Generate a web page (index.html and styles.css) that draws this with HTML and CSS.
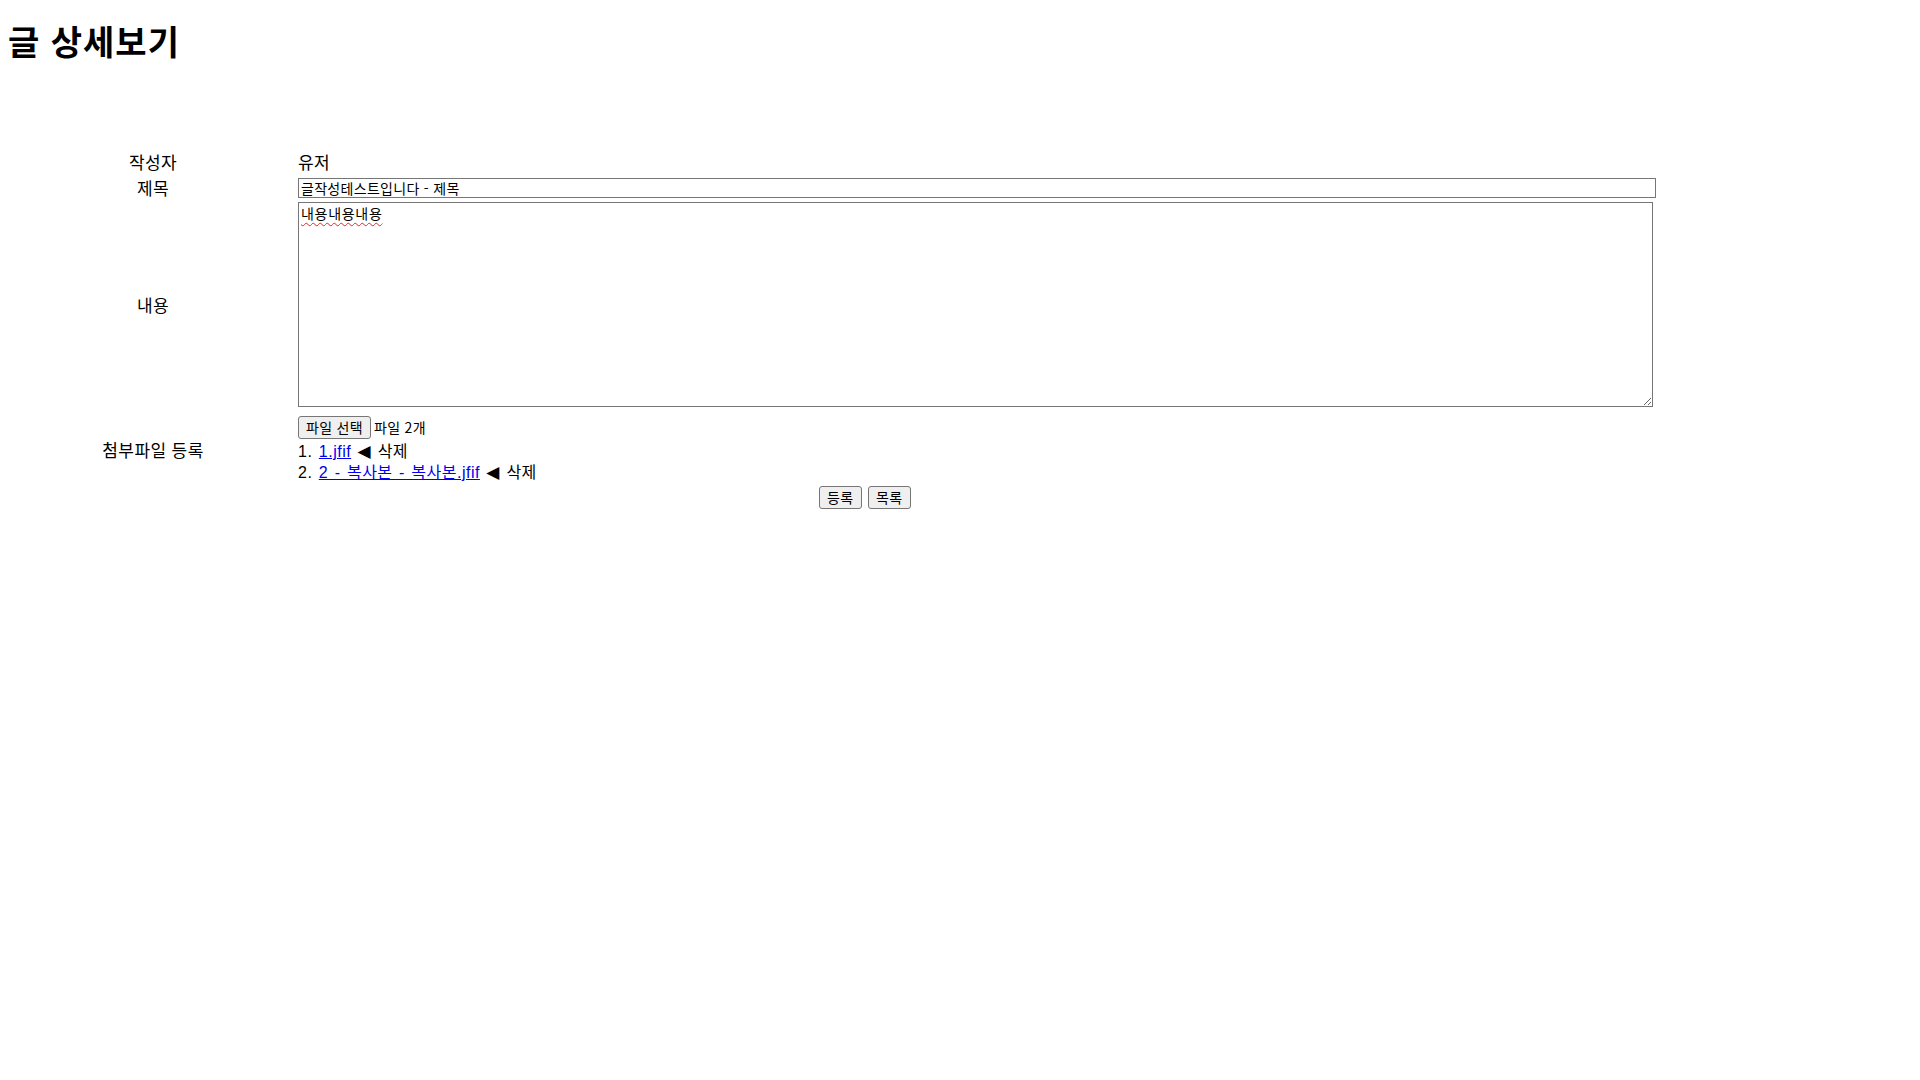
FILE: index.html
```html
<!DOCTYPE html>
<html lang="ko">
<head>
<meta charset="utf-8">
<title>글 상세보기</title>
<link rel="stylesheet" href="styles.css">
</head>
<body>
<h1 class="page-title">글 상세보기</h1>
<form class="board">
  <div class="row row-author">
    <div class="label">작성자</div>
    <div class="value">유저</div>
  </div>
  <div class="row row-title">
    <div class="label">제목</div>
    <div class="value"><input class="title-input" type="text" value="글작성테스트입니다 - 제목" spellcheck="false"></div>
  </div>
  <div class="row row-content">
    <div class="label">내용</div>
    <div class="value"><textarea class="content-area" spellcheck="false">내용내용내용</textarea></div>
  </div>
  <div class="row row-files">
    <div class="label">첨부파일 등록</div>
    <div class="value">
      <div class="file-line"><span class="btn file-btn">파일 선택</span><span class="file-count">파일 2개</span></div>
      <ol class="file-list">
        <li><span class="num">1.</span> <a href="#">1.jfif</a> <span class="arrow">◀</span> <span class="del">삭제</span></li>
        <li><span class="num">2.</span> <a href="#">2 - 복사본 - 복사본.jfif</a> <span class="arrow">◀</span> <span class="del">삭제</span></li>
      </ol>
    </div>
  </div>
  <div class="actions">
    <button type="button" class="btn">등록</button>
    <button type="button" class="btn">목록</button>
  </div>
</form>
</body>
</html>
```
FILE: styles.css
```css
html, body {
  background: #ffffff;
}
body {
  margin: 8px;
  color: #000000;
  font-family: "Noto Sans CJK KR", "Noto Sans", sans-serif;
  font-size: 17px;
  letter-spacing: 0.4px;
  line-height: 21px;
}
.page-title {
  margin: 12px 0 21px;
  font-size: 34px;
  letter-spacing: 1px;
  line-height: 42px;
  font-weight: 700;
}
.board {
  margin-top: 89px;
  display: flex;
  flex-direction: column;
}
.row {
  display: grid;
  grid-template-columns: 290px 1fr;
  align-items: center;
}
.label {
  text-align: center;
}
.value {
  min-width: 0;
}
.row-author {
  height: 22px;
  align-items: start;
}
.row-author .label, .row-author .value {
  line-height: 22px;
}
.row-title {
  margin-top: 4px;
  height: 20px;
}
.title-input {
  display: block;
  box-sizing: border-box;
  width: 1358px;
  height: 20px;
  margin: 0;
  padding: 0 2px;
  border: 1px solid #767676;
  border-radius: 0;
  font-family: "Noto Sans CJK KR", "Noto Sans", sans-serif;
  font-size: 14px;
  letter-spacing: 0.3px;
  line-height: 18px;
  color: #000;
  background: #fff;
  outline: none;
}
.row-content {
  margin-top: 5px;
  padding-bottom: 5px;
}
.content-area {
  display: block;
  box-sizing: border-box;
  width: 1355px;
  height: 205px;
  margin: 0;
  padding: 1px 2px;
  border: 1px solid #767676;
  font-family: "Noto Sans CJK KR", "Noto Sans", sans-serif;
  font-size: 14px;
  letter-spacing: 0.7px;
  line-height: 18px;
  color: #000;
  background: #fff;
  text-decoration: underline wavy #e0282d;
  text-decoration-thickness: 1px;
  text-underline-offset: 3px;
  outline: none;
}
.row-files {
  margin-top: 4px;
}
.file-line {
  height: 25px;
  display: flex;
  align-items: flex-start;
  font-size: 14px;
  letter-spacing: 0.3px;
  line-height: 23px;
}
.btn {
  box-sizing: border-box;
  display: inline-flex;
  align-items: center;
  justify-content: center;
  height: 23px;
  margin: 0;
  padding: 0 7px;
  border: 1px solid #767676;
  border-radius: 3px;
  background: #efefef;
  color: #000;
  font-family: "Noto Sans CJK KR", "Noto Sans", sans-serif;
  font-size: 14px;
  letter-spacing: 0.3px;
  line-height: 21px;
}
.file-btn {
  width: 73px;
  padding: 0;
}
.file-count {
  margin-left: 3px;
}
.file-list {
  list-style: none;
  margin: 0;
  padding: 0;
  font-family: "Liberation Sans", "Noto Sans CJK KR", sans-serif;
  font-size: 16px;
  letter-spacing: 0.5px;
  word-spacing: 1.5px;
  line-height: 21px;
}
.file-list li {
  height: 21px;
}
.file-list a {
  color: #0000ee;
  text-decoration: underline;
}
.arrow {
  font-family: "DejaVu Sans", sans-serif;
  font-size: 17px;
}
.actions {
  width: 90%;
  margin-top: 3px;
  display: flex;
  justify-content: center;
  gap: 6px;
}
.actions .btn {
  width: 43px;
  padding: 0;
}
```
